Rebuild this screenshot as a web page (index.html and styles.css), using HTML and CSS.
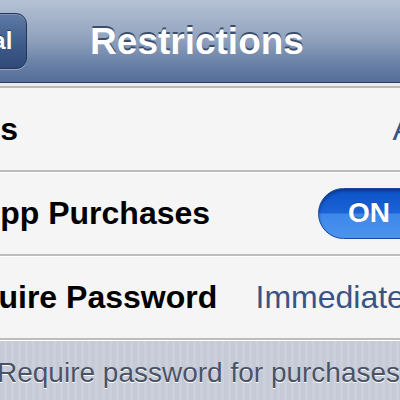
FILE: index.html
```html
<!DOCTYPE html>
<html lang="en">
<head>
    <meta charset="UTF-8">
    <meta name="viewport" content="width=device-width, initial-scale=1.0">
    <title>Restrictions</title>
    <link rel="stylesheet" href="styles.css">
</head>
<body>

    <div class="navbar">
        <div class="back-button">General</div>
        <h1>Restrictions</h1>
        <div></div>
    </div>

    <div class="group">
        <div class="row">
            <span class="label">Apps</span>
            <span class="value">All</span>
        </div>
        <div class="row">
            <span class="label">In-App Purchases</span>
            <span class="switch"><span class="switch-text">ON</span></span>
        </div>
        <div class="row">
            <span class="label">Require Password</span>
            <span class="value">Immediately</span>
        </div>
    </div>

    <div class="footer">
        <p>Require password for purchases</p>
    </div>

</body>
</html>
```

FILE: styles.css
```css
html, body {
    margin: 0;
    width: 400px;
    height: 400px;
    overflow: hidden;
    font-family: "Liberation Sans", Arial, sans-serif;
    background-color: #c7ccd8;
}
.navbar {
    height: 82px;
    display: grid;
    grid-template-columns: 1fr auto 1fr;
    align-items: center;
    background: linear-gradient(#b5c2d5, #93a4bf 45%, #6c83a9 75%, #546e98);
    border-bottom: 1px solid #2c3d5b;
}
.navbar h1 {
    margin: 2px 0 0 0;
    font-size: 37px;
    font-weight: bold;
    color: white;
    text-shadow: 0 -2px 0 #3a4d6c;
    transform: translateX(-3px);
}
.back-button {
    justify-self: start;
    margin-left: -98px;
    height: 54px;
    line-height: 54px;
    padding: 0 14px 0 20px;
    font-size: 24px;
    font-weight: bold;
    color: white;
    text-shadow: 0 -1px 0 #26375a;
    background: linear-gradient(#5f7aa5, #3f5b8a 55%, #2f4a79);
    border: 1px solid #23365a;
    border-radius: 11px;
    box-shadow: 0 1px 0 rgba(255, 255, 255, 0.35), inset 0 1px 0 rgba(255, 255, 255, 0.2);
}
.group {
    background-color: #f5f5f5;
}
/* light strip and grey edge under the bar */
.group::before {
    content: "";
    display: block;
    height: 3px;
    background: #ebebeb;
    border-bottom: 2px solid #b8b8b8;
}
.row {
    display: flex;
    align-items: center;
    height: 82px;
    width: 562px;
    margin-left: -62px;
    border-bottom: 2px solid #bdbdbd;
    box-shadow: 0 1px 0 #ffffff;
}
.label {
    font-size: 32px;
    font-weight: bold;
    color: #000;
    white-space: nowrap;
}
.value {
    margin-left: auto;
    margin-right: 72px;
    font-size: 32px;
    color: #385487;
    white-space: nowrap;
}
.switch {
    margin-left: auto;
    margin-right: 3px;
    width: 177px;
    height: 49px;
    border: 1px solid #1848a0;
    border-radius: 26px;
    background: linear-gradient(#0b52c8, #1c63d8 48%, #3d88ea 52%, #4b93ee);
    box-shadow: inset 0 2px 3px rgba(0, 0, 0, 0.35);
    display: flex;
    align-items: center;
}
.switch-text {
    margin-left: 29px;
    font-size: 28px;
    font-weight: bold;
    color: white;
    text-shadow: 0 -1px 0 #1a4aa0;
}
.footer {
    height: 62px;
    border-top: 1px solid #ffffff;
    background: repeating-linear-gradient(90deg, #c5cad6 0, #c5cad6 4px, #cbd0db 4px, #cbd0db 7px);
}
.footer p {
    margin: 16px 0 0 -3px;
    font-size: 28px;
    color: #4a5366;
    white-space: nowrap;
    text-shadow: 0 1px 0 #ffffff;
}
```
